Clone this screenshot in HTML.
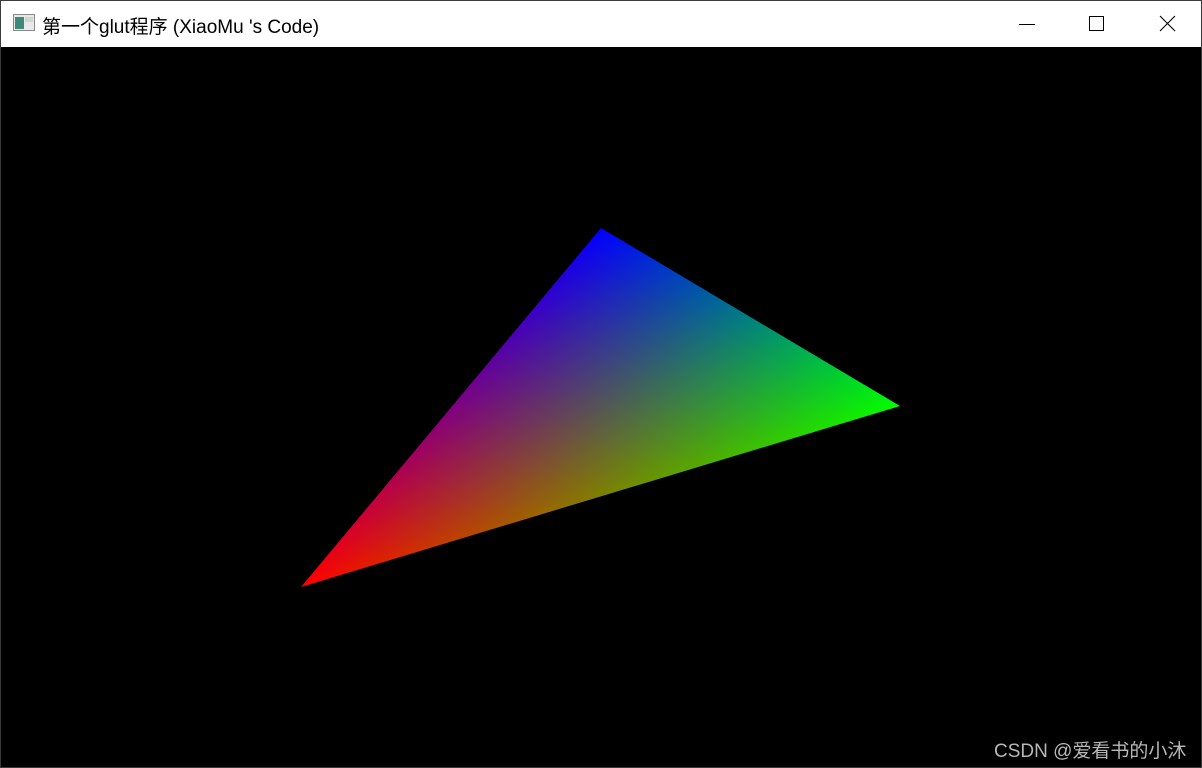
<!DOCTYPE html>
<html><head><meta charset="utf-8"><style>
html,body{margin:0;padding:0;width:1202px;height:768px;overflow:hidden;background:#000}
.win{position:absolute;left:0;top:0;width:1200px;height:766px;border:1px solid #3a3a3a;background:#000}
.title{position:absolute;left:0;top:0;width:1200px;height:46px;background:#fff}
.t{position:absolute;left:41px;top:11px;font:19px "Liberation Sans","Noto Sans CJK SC",sans-serif;color:#000;white-space:nowrap}
.wm{position:absolute;left:994px;top:736px;font:19px "Liberation Sans","Noto Sans CJK SC",sans-serif;color:#b8b8b8;white-space:nowrap}
</style></head><body>
<div class="win">
<div class="title">
<svg width="24" height="20" style="position:absolute;left:12px;top:13px">
<rect x="0.5" y="0.5" width="21" height="16" fill="#e8e8e8" stroke="#888"/>
<rect x="2" y="3" width="9" height="12" fill="#3d8a7a"/>
<rect x="12" y="3" width="8" height="5" fill="#cfd8cf"/>
</svg>
<div class="t">第一个glut程序 (XiaoMu 's Code)</div>
<svg width="1200" height="46" style="position:absolute;left:0;top:0">
<line x1="1018" y1="23.5" x2="1034" y2="23.5" stroke="#000" stroke-width="1"/>
<rect x="1088.5" y="15.5" width="14" height="14" fill="none" stroke="#000"/>
<path d="M1159 15 L1174 30 M1174 15 L1159 30" stroke="#000" stroke-width="1.1"/>
</svg>
</div>
</div>
<svg width="1202" height="768" style="position:absolute;left:0;top:0">
<defs>
<linearGradient id="r" gradientUnits="userSpaceOnUse" x1="301" y1="587" x2="537.3" y2="190.1"><stop offset="0" stop-color="#f00"/><stop offset="1" stop-color="#000"/></linearGradient>
<linearGradient id="b" gradientUnits="userSpaceOnUse" x1="601" y1="228" x2="675.3" y2="473.9"><stop offset="0" stop-color="#00f"/><stop offset="1" stop-color="#000"/></linearGradient>
<linearGradient id="g" gradientUnits="userSpaceOnUse" x1="900" y1="406" x2="636.4" y2="185.7"><stop offset="0" stop-color="#0f0"/><stop offset="1" stop-color="#000"/></linearGradient>
</defs>
<g style="isolation:isolate">
<polygon points="601,228 900,406 301,587" fill="url(#r)"/>
<polygon points="601,228 900,406 301,587" fill="url(#g)" style="mix-blend-mode:screen"/>
<polygon points="601,228 900,406 301,587" fill="url(#b)" style="mix-blend-mode:screen"/>
</g>
</svg>
<div class="wm">CSDN @爱看书的小沐</div>
</body></html>
